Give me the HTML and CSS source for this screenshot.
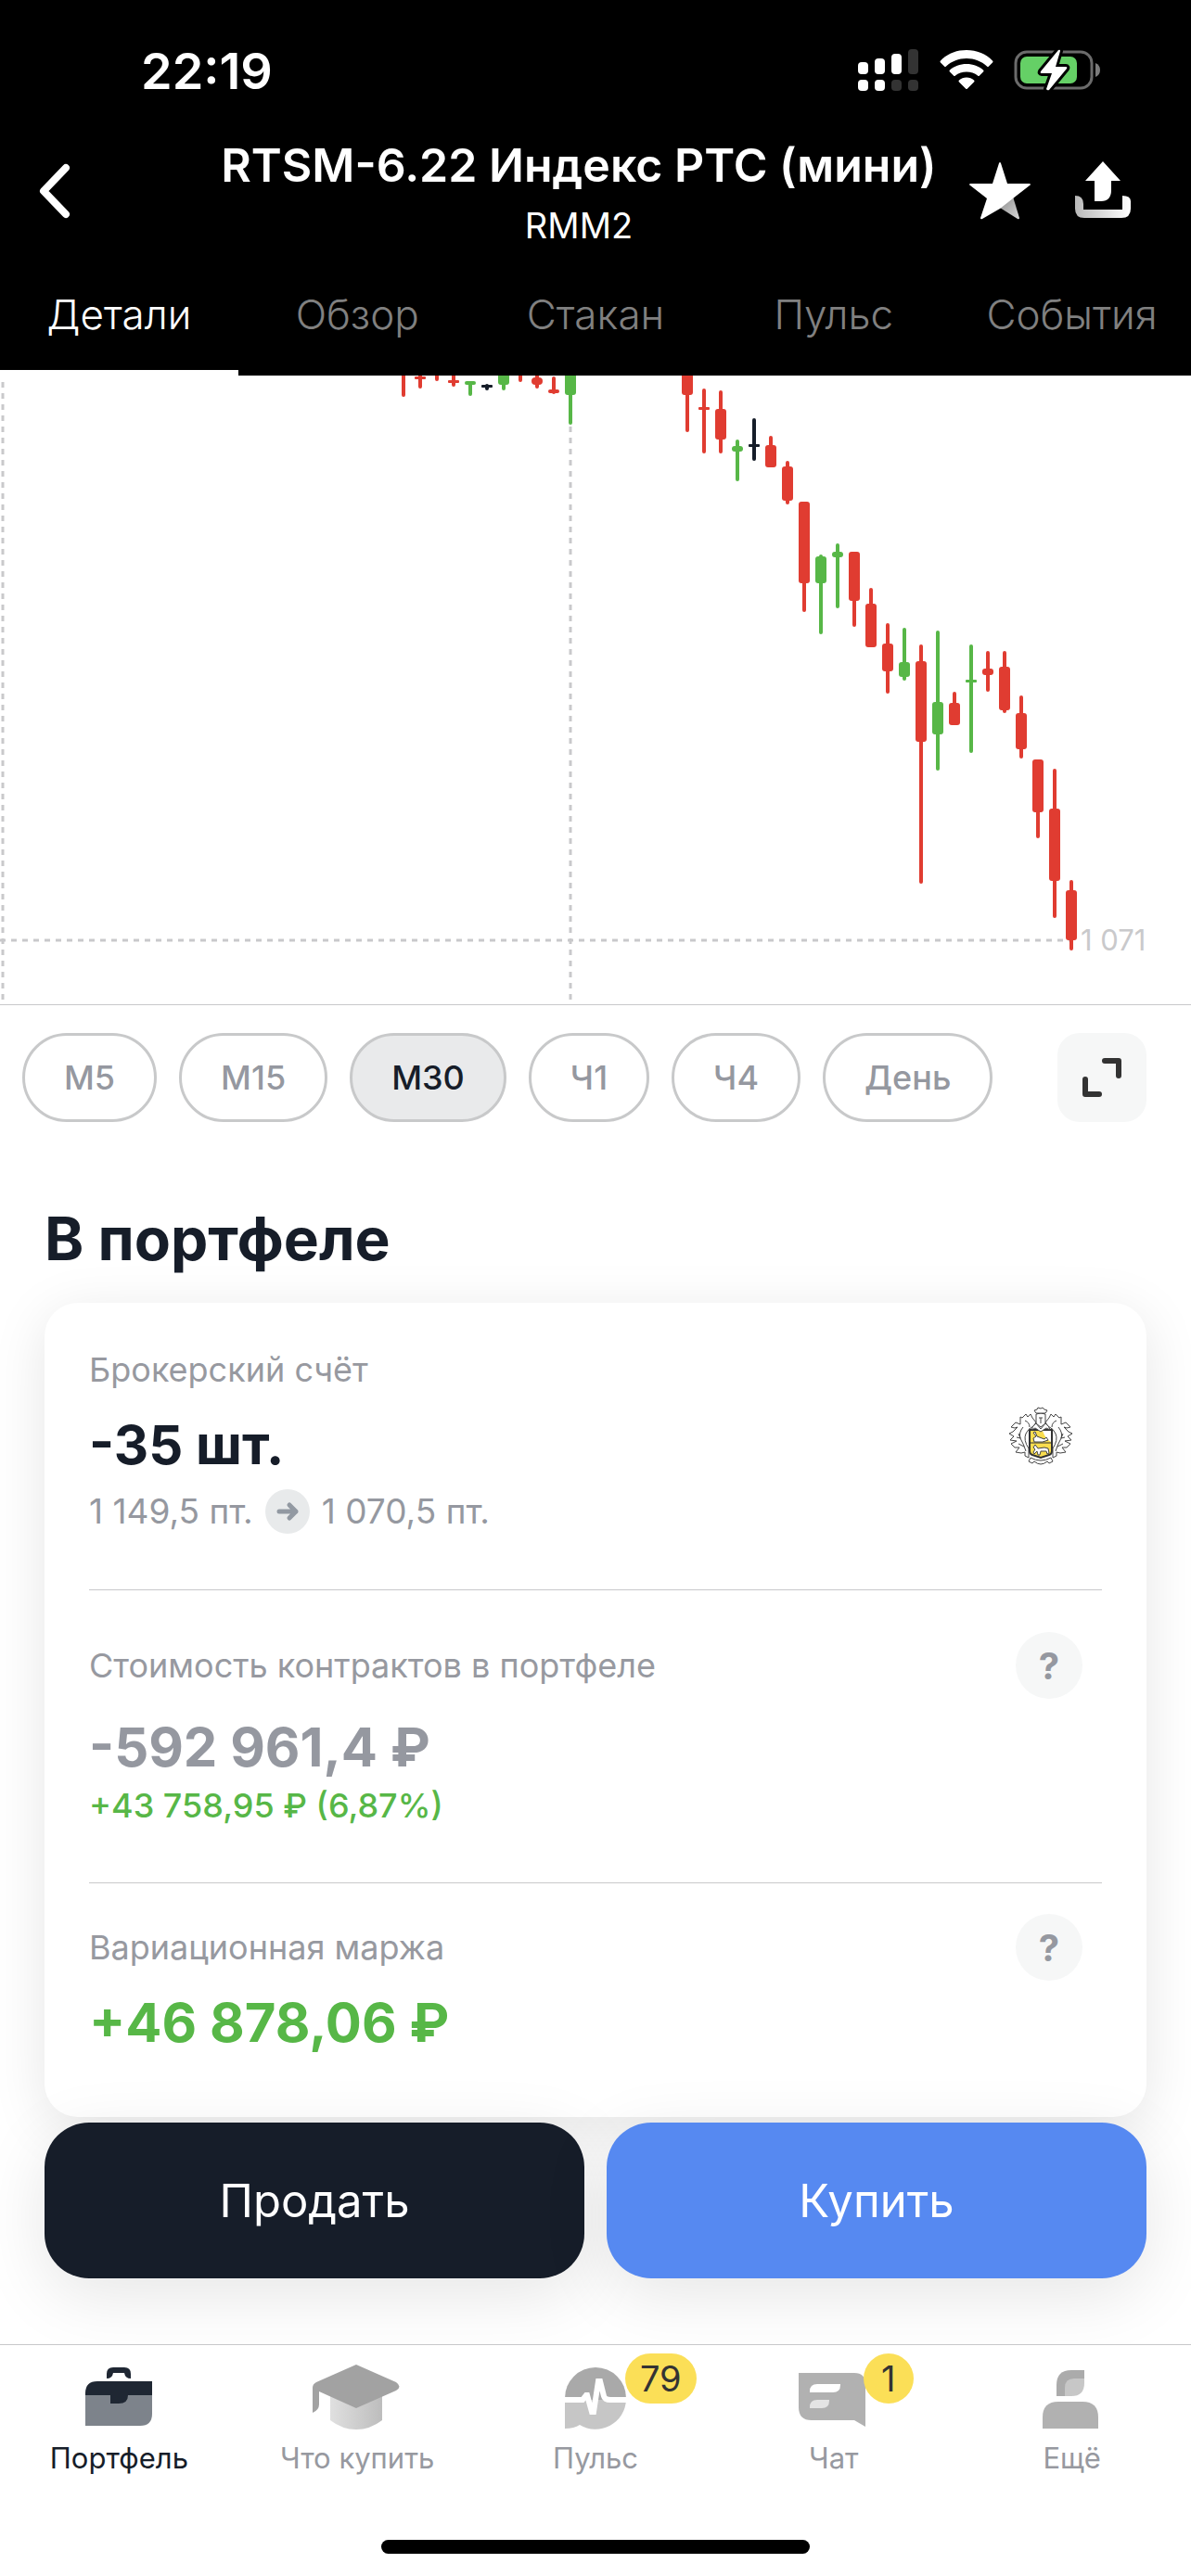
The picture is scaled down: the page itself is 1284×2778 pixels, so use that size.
FILE: index.html
```html
<!DOCTYPE html>
<html lang="ru">
<head>
    <meta charset="UTF-8">
    <meta name="viewport" content="width=device-width, initial-scale=1.0">
    <title>RTSM-6.22 Индекс РТС (мини)</title>
    <link rel="stylesheet" href="styles.css">
</head>
<body>

    <header class="header">
        <div class="status-bar">
            <time class="clock">22:19</time>
            <div class="status-icons">
                <svg width="66" height="46" viewBox="0 0 66 46" aria-hidden="true">
                    <g fill="#fff">
                        <rect x="0" y="14" width="11" height="13" rx="4"/>
                        <rect x="18" y="10" width="11" height="17" rx="4"/>
                        <rect x="36" y="5" width="11" height="22" rx="4"/>
                        <rect x="0" y="33" width="11" height="12" rx="4"/>
                        <rect x="18" y="33" width="11" height="12" rx="4"/>
                    </g>
                    <g fill="#333">
                        <rect x="54" y="0" width="11" height="27" rx="4"/>
                        <rect x="36" y="33" width="11" height="12" rx="4"/>
                        <rect x="54" y="33" width="11" height="12" rx="4"/>
                    </g>
                </svg>
                <svg width="58" height="46" viewBox="0 0 58 46" aria-hidden="true">
                    <path fill="#fff" d="M29 1C18 1 8 5 1 12.500Q0 13.500 1 14.500L5 18.500Q6 19.500 7 18.500C13 13 20.500 10 29 10S45 13 51 18.500Q52 19.500 53 18.500L57 14.500Q58 13.500 57 12.500C50 5 40 1 29 1ZM29 16C22 16 15.500 18.500 11 22.500Q10 23.500 11 24.500L15 28.500Q16 29.500 17 28.500C20 26 24.500 24.500 29 24.500S38 26 41 28.500Q42 29.500 43 28.500L47 24.500Q48 23.500 47 22.500C42.500 18.500 36 16 29 16ZM29 30.500C26 30.500 23 31.700 21 33.500Q20 34.500 21 35.500L28 42.500Q29 43.500 30 42.500L37 35.500Q38 34.500 37 33.500C35 31.700 32 30.500 29 30.500Z"/>
                </svg>
                <svg width="96" height="46" viewBox="0 0 96 46" aria-hidden="true">
                    <rect x="2" y="3" width="82" height="39" rx="12" fill="none" stroke="#6b6b6b" stroke-width="3"/>
                    <path fill="#7c7c7c" d="M88 15q5 2 5 7.500t-5 7.500z"/>
                    <rect x="7" y="8" width="61" height="29" rx="7" fill="#65d066"/>
                    <path fill="#fff" stroke="#000" stroke-width="6" stroke-linejoin="round" paint-order="stroke" d="M48 1L29 24Q28 26 30 26H41L35 43Q36 45 38 44L57 21Q58 19 56 19H45L50 2Q50 0 48 1Z"/>
                </svg>
            </div>
        </div>

        <div class="title-bar">
            <button class="icon-button back" type="button" aria-label="Назад">
                <svg width="44" height="64" viewBox="0 0 44 64" aria-hidden="true">
                    <path d="M35 7L11 32L35 57" fill="none" stroke="#fff" stroke-width="8" stroke-linecap="round" stroke-linejoin="round"/>
                </svg>
            </button>
            <div class="titles">
                <h1 class="title">RTSM-6.22 Индекс РТС (мини)</h1>
                <p class="ticker">RMM2</p>
            </div>
            <button class="icon-button" type="button" aria-label="В избранное">
                <svg width="66" height="64" viewBox="0 0 66 64" aria-hidden="true">
                    <defs>
                        <linearGradient id="starShade" x1="0" y1="0" x2="1" y2="1">
                            <stop offset="0" stop-color="#8c8c8c"/>
                            <stop offset="1" stop-color="#d8d8d8"/>
                        </linearGradient>
                    </defs>
                    <path fill="url(#starShade)" d="M33 50L47 38L54 61Q54 63 52 62Z"/>
                    <path fill="#fff" d="M32 2Q33 0 34 2L41 24H65Q67 25 65 26L47 40L33 51L14 62Q12 63 12 61L19 40L1 26Q-1 25 1 24H25Z"/>
                </svg>
            </button>
            <button class="icon-button" type="button" aria-label="Поделиться">
                <svg width="62" height="64" viewBox="0 0 62 64" aria-hidden="true">
                    <defs>
                        <linearGradient id="trayShade" x1="0" y1="0" x2="1" y2="0">
                            <stop offset="0" stop-color="#b9b9b9"/>
                            <stop offset=".85" stop-color="#f4f4f4"/>
                            <stop offset="1" stop-color="#fff"/>
                        </linearGradient>
                    </defs>
                    <path fill="url(#trayShade)" d="M1 37Q10 37 10 46V52H52V37Q61 37 61 43V51Q61 61 51 61H11Q1 61 1 51Z"/>
                    <path fill="#fff" d="M31 0L50 21H40V31Q40 43 29 43H22V21H12Z"/>
                </svg>
            </button>
        </div>

        <nav class="tabs">
            <a class="tab active" href="#details">Детали</a>
            <a class="tab" href="#overview">Обзор</a>
            <a class="tab" href="#orders">Стакан</a>
            <a class="tab" href="#pulse">Пульс</a>
            <a class="tab" href="#events">События</a>
        </nav>
    </header>

    <main>
        <section class="chart" aria-label="График">
            <svg class="candles" viewBox="0 0 1284 678" role="img">
                <g class="guides">
                    <path d="M3 7V678"/>
                    <path d="M615 55V678"/>
                    <path d="M0 609H1155"/>
                </g>
                <g class="down">
                    <path d="M435 -4V21M453 -4V12M471 -4V4M489 -4V10M561 -4V5M579 -4V12M597 3V18M741 0V59M759 16V82M777 18V82M831 67V90M849 94V137M867 140V253M921 195V269M939 231V285M957 269V341M993 292V546M1029 343V370M1065 299V339M1083 299V362M1101 347V411M1119 420V497M1137 426V583M1155 546V618"/>
                    <rect x="447" y="1" width="12" height="3" rx="1"/>
                    <rect x="483" y="5" width="12" height="3" rx="1"/>
                    <rect x="573" y="2" width="12" height="8" rx="4"/>
                    <rect x="591" y="15" width="12" height="4" rx="2"/>
                    <rect x="735" y="-8" width="12" height="29" rx="3"/>
                    <rect x="753" y="34" width="12" height="3" rx="1"/>
                    <rect x="771" y="36" width="12" height="33" rx="3"/>
                    <rect x="825" y="75" width="12" height="24" rx="3"/>
                    <rect x="843" y="98" width="12" height="37" rx="3"/>
                    <rect x="861" y="136" width="12" height="88" rx="3"/>
                    <rect x="915" y="190" width="12" height="53" rx="3"/>
                    <rect x="933" y="246" width="12" height="47" rx="3"/>
                    <rect x="951" y="289" width="12" height="30" rx="3"/>
                    <rect x="987" y="308" width="12" height="87" rx="3"/>
                    <rect x="1023" y="353" width="12" height="24" rx="3"/>
                    <rect x="1059" y="316" width="12" height="7" rx="3"/>
                    <rect x="1077" y="314" width="12" height="47" rx="3"/>
                    <rect x="1095" y="364" width="12" height="39" rx="3"/>
                    <rect x="1113" y="414" width="12" height="57" rx="3"/>
                    <rect x="1131" y="467" width="12" height="78" rx="3"/>
                    <rect x="1149" y="555" width="12" height="54" rx="3"/>
                </g>
                <g class="up">
                    <path d="M507 9V20M543 -4V14M615 0V51M795 71V112M885 195V277M903 183V249M975 274V327M1011 277V424M1047 292V405"/>
                    <rect x="501" y="6" width="12" height="4" rx="2"/>
                    <rect x="537" y="-8" width="12" height="18" rx="3"/>
                    <rect x="609" y="-8" width="12" height="29" rx="3"/>
                    <rect x="789" y="76" width="12" height="6" rx="3"/>
                    <rect x="879" y="195" width="12" height="29" rx="3"/>
                    <rect x="897" y="190" width="12" height="6" rx="3"/>
                    <rect x="969" y="309" width="12" height="16" rx="3"/>
                    <rect x="1005" y="352" width="12" height="35" rx="3"/>
                    <rect x="1041" y="328" width="12" height="3" rx="1"/>
                </g>
                <g class="flat">
                    <path d="M525 11V14M813 48V90"/>
                    <rect x="519" y="10" width="12" height="3" rx="1"/>
                    <rect x="807" y="74" width="12" height="3" rx="1"/>
                </g>
                <text class="price" x="1165" y="620">1 071</text>
            </svg>
        </section>

        <div class="range-bar">
            <button class="range" type="button">M5</button>
            <button class="range" type="button">M15</button>
            <button class="range selected" type="button">M30</button>
            <button class="range" type="button">Ч1</button>
            <button class="range" type="button">Ч4</button>
            <button class="range" type="button">День</button>
            <button class="expand" type="button" aria-label="На весь экран">
                <svg width="44" height="44" viewBox="0 0 44 44" aria-hidden="true">
                    <path d="M25 4H40V20M4 24V40H19" fill="none" stroke="#333" stroke-width="6" stroke-linecap="round" stroke-linejoin="round"/>
                </svg>
            </button>
        </div>

        <section class="portfolio" id="details">
            <h2 class="section-title">В портфеле</h2>

            <div class="card">
                <div class="card-row account">
                    <div>
                        <p class="label">Брокерский счёт</p>
                        <p class="value">-35 шт.</p>
                        <p class="prices">
                            <span>1 149,5 пт.</span>
                            <svg width="48" height="48" viewBox="0 0 48 48" aria-hidden="true">
                                <circle cx="24" cy="24" r="24" fill="#e8eaeb"/>
                                <path d="M15 24H33M26 17L33 24L26 31" fill="none" stroke="#9299a2" stroke-width="5" stroke-linecap="round" stroke-linejoin="round"/>
                            </svg>
                            <span>1 070,5 пт.</span>
                        </p>
                    </div>
                    <svg class="crest" width="72" height="66" viewBox="0 0 72 66" aria-hidden="true">
                        <path fill="#f9dd4e" stroke="#333" stroke-width="2" d="M24 26H48V49Q48 52 45 53L36 56L27 53Q24 52 24 49Z"/>
                        <path fill="#fff" d="M38 27H47V39L43 36Q40 33 38 27Z"/>
                        <path stroke="#333" stroke-width="1" d="M24 40H48"/>
                        <g fill="#fff" stroke="#444" stroke-width="1" stroke-linejoin="round">
                            <path d="M28 29L30 28L32 33L40 36L42 34L44 37L38 39H29L28 35L31 33Z"/>
                            <path d="M30 42L33 46L40 45L44 46L45 51L43 52L42 49L36 49L35 53H33L32 49L29 52L28 50L30 47L28 45Z"/>
                            <path d="M31 9Q36 7 41 9V19L36 23L31 19ZM34 13H36V19M36 13H38"/>
                            <path d="M29 5L32 4L33 2L36 3L38 2L40 4L43 5L41 8H31Z"/>
                            <path d="M26 26Q27 21 31 19L36 25L41 19Q45 21 46 26L42 24L36 28L30 24Z"/>
                            <path d="M31 18L27 13L25 9L22 12L20 9L16 13L14 12V20L9 18L4 23L8 24L11 23L6 28L2 30L7 33L3 37L10 38L4 41L8 45L13 45L9 50L15 51L19 50V54L23 56L23 46Q17 37 20 30Q22 25 28 22Z"/>
                            <path d="M41 18L45 13L47 9L50 12L52 9L56 13L58 12V20L63 18L68 23L64 24L61 23L66 28L70 30L65 33L69 37L62 38L68 41L64 45L59 45L63 50L57 51L53 50V54L49 56L49 46Q55 37 52 30Q50 25 44 22Z"/>
                            <path fill="none" d="M19 16Q24 18 24 23M17 23Q12 29 14 35Q18 42 20 49M12 30L14 35L10 34M12 41L18 44M53 16Q48 18 48 23M55 23Q60 29 58 35Q54 42 52 49M60 30L58 35L62 34M60 41L54 44"/>
                            <path d="M25 56Q36 62 47 56L49 60L45 62L43 60Q36 66 29 60L27 62L23 60Z"/>
                        </g>
                    </svg>
                </div>

                <div class="card-row contracts">
                    <div class="label-line">
                        <p class="label">Стоимость контрактов в портфеле</p>
                        <button class="help" type="button" aria-label="Подсказка о стоимости">?</button>
                    </div>
                    <p class="value muted">-592 961,4 ₽</p>
                    <p class="change">+43 758,95 ₽ (6,87%)</p>
                </div>

                <div class="card-row margin">
                    <div class="label-line">
                        <p class="label">Вариационная маржа</p>
                        <button class="help" type="button" aria-label="Подсказка о марже">?</button>
                    </div>
                    <p class="value gain">+46 878,06 ₽</p>
                </div>
            </div>

            <div class="actions">
                <button class="action sell" type="button">Продать</button>
                <button class="action buy" type="button">Купить</button>
            </div>
        </section>
    </main>

    <footer class="footer">
        <nav class="tab-bar">
            <a class="tab-item current" href="#portfolio">
                <span class="tab-icon">
                    <svg width="96" height="80" viewBox="0 0 96 80" aria-hidden="true">
                        <path fill="#7d838b" d="M12 40H84V62Q84 75 71 75H12Z"/>
                        <path fill="#1f2733" d="M12 42V40Q12 27 25 27H84V42H58Q58 51 48 51H39V42ZM35 24V19Q35 12 42 12H54Q61 12 61 19V24Q55 24 54 18H42Q41 24 35 24Z"/>
                    </svg>
                </span>
                Портфель
            </a>
            <a class="tab-item" href="#invest">
                <span class="tab-icon">
                    <svg width="96" height="80" viewBox="0 0 96 80" aria-hidden="true">
                        <defs>
                            <linearGradient id="capShade" x1="0" y1="0" x2="1" y2="0">
                                <stop offset="0" stop-color="#e0e0e0"/>
                                <stop offset="1" stop-color="#bdbdbd"/>
                            </linearGradient>
                        </defs>
                        <path fill="url(#capShade)" d="M19 40H75V69Q62 79 47 79T19 69Z"/>
                        <path fill="#a2a2a2" d="M47 9L90 28Q97 33 90 37L47 56L7 38V52Q7 58 0 61V34Q0 30 4 28Z"/>
                    </svg>
                </span>
                Что купить
            </a>
            <a class="tab-item" href="#feed">
                <span class="tab-icon">
                    <svg width="96" height="80" viewBox="0 0 96 80" aria-hidden="true">
                        <path fill="#a9a9a9" d="M15 47V45A33 33 0 0 1 81 45V47Z"/>
                        <path fill="#c6c6c6" d="M15 47H81A33 33 0 0 1 31 74Q25 78 15 78Z"/>
                        <path d="M15 47H34L38 42H39L44 60H46L51 27H53L57 43Q58 47 64 47H82" fill="none" stroke="#fff" stroke-width="6"/>
                    </svg>
                    <span class="badge">79</span>
                </span>
                Пульс
            </a>
            <a class="tab-item" href="#chat">
                <span class="tab-icon">
                    <svg width="96" height="80" viewBox="0 0 96 80" aria-hidden="true">
                        <path fill="#b1b1b1" d="M10 18H70Q82 18 82 30V76L70 69H24Q10 69 10 55Z"/>
                        <path fill="#fff" d="M22 39V38Q22 30 30 30H55V31Q55 39 47 39Z"/>
                        <path fill="#e4e4e4" d="M22 56V55Q22 47 30 47H43V48Q43 56 35 56Z"/>
                    </svg>
                    <span class="badge">1</span>
                </span>
                Чат
            </a>
            <a class="tab-item" href="#more">
                <span class="tab-icon">
                    <svg width="96" height="80" viewBox="0 0 96 80" aria-hidden="true">
                        <path fill="#ababab" d="M31 43V31Q31 15 47 15H61V26L40 43Z"/>
                        <path fill="#c7c7c7" d="M40 43V34Q40 24 50 24H61V29Q61 43 47 43Z"/>
                        <path fill="#b1b1b1" d="M16 78V66Q16 49 33 49H59Q76 49 76 66V78Z"/>
                    </svg>
                </span>
                Ещё
            </a>
        </nav>
        <div class="home-indicator"></div>
    </footer>

</body>
</html>
```
FILE: styles.css
```css
* {
    box-sizing: border-box;
}
body {
    margin: 0;
    font-family: Inter, "Liberation Sans", sans-serif;
    color: #161d29;
    background: #fff;
}
h1, h2, p {
    margin: 0;
}
button {
    padding: 0;
    border: none;
    font-family: inherit;
    cursor: pointer;
}
a {
    text-decoration: none;
}
svg {
    display: block;
}

/* Header */
.header {
    background: #000;
    color: #fff;
}
.status-bar {
    display: flex;
    justify-content: space-between;
    align-items: flex-end;
    height: 108px;
    padding: 0 95px 0 152px;
}
.clock {
    font-size: 54px;
    font-weight: 600;
    line-height: 62px;
}
.status-icons {
    display: flex;
    gap: 22px;
    padding-bottom: 9px;
}
.title-bar {
    display: grid;
    grid-template-columns: 226px 1fr 111px 111px;
    margin-top: 38px;
    padding-right: 40px;
}
.icon-button {
    display: flex;
    justify-content: center;
    align-items: center;
    height: 120px;
    background: none;
}
.back {
    justify-content: flex-start;
    padding-left: 36px;
}
.titles {
    text-align: center;
    white-space: nowrap;
}
.title {
    font-size: 50px;
    font-weight: 600;
    line-height: 64px;
}
.ticker {
    font-size: 38px;
    line-height: 66px;
}
.tabs {
    display: grid;
    grid-template-columns: repeat(5, 1fr);
}
.tab {
    height: 129px;
    padding-top: 4px;
    border-bottom: 6px solid #000;
    font-size: 44px;
    font-weight: 300;
    line-height: 119px;
    text-align: center;
    color: #808080;
}
.tab.active {
    border-color: #fff;
    color: #fff;
}

/* Chart */
.chart {
    border-bottom: 1px solid #c8c8ca;
}
.candles {
    width: 100%;
    height: auto;
}
.candles path {
    fill: none;
    stroke-width: 4;
    stroke-linecap: round;
}
.candles .guides path {
    stroke: #c9c9cb;
    stroke-width: 3;
    stroke-linecap: butt;
    stroke-dasharray: 6 6;
}
.down {
    fill: #e03c31;
    stroke: #e03c31;
}
.up {
    fill: #57b747;
    stroke: #57b747;
}
.flat {
    fill: #161d29;
    stroke: #161d29;
}
.candles rect {
    stroke: none;
}
.price {
    font-size: 31px;
    fill: #c9c9cb;
}

/* Chart ranges */
.range-bar {
    display: flex;
    gap: 24px;
    padding: 30px 48px 0 24px;
}
.range {
    height: 96px;
    padding: 0 42px;
    border: 3px solid #c8c9ca;
    border-radius: 48px;
    font-size: 36px;
    font-weight: 500;
    color: #9598a0;
    background: #fff;
}
.range.selected {
    color: #161d29;
    background: #e9eaeb;
}
.expand {
    display: flex;
    justify-content: center;
    align-items: center;
    width: 96px;
    height: 96px;
    margin-left: auto;
    border-radius: 24px;
    background: #f6f7f7;
}

/* Portfolio */
.portfolio {
    padding: 86px 48px 71px;
    overflow: hidden;
}
.section-title {
    font-size: 64px;
    font-weight: 700;
    line-height: 80px;
}
.card {
    margin-top: 29px;
    padding: 0 48px;
    border-radius: 36px;
    background: #fff;
    box-shadow: 0 12px 60px rgba(0, 0, 0, 0.1);
}
.card-row + .card-row {
    border-top: 1px solid #c8c8ca;
}
.account {
    display: flex;
    justify-content: space-between;
    padding: 48px 30px 60px 0;
}
.crest {
    margin-top: 63px;
}
.label {
    font-size: 36px;
    line-height: 48px;
    color: #9799a0;
}
.value {
    font-size: 58px;
    font-weight: 700;
    line-height: 72px;
}
.account .value {
    margin: 21px 0 12px;
}
.muted {
    color: #9598a0;
}
.gain {
    color: #57b747;
}
.prices {
    display: flex;
    gap: 13px;
    font-size: 37px;
    line-height: 48px;
    color: #9598a0;
}
.label-line {
    display: flex;
    justify-content: space-between;
    align-items: center;
    padding-right: 21px;
}
.help {
    width: 72px;
    height: 72px;
    border-radius: 50%;
    font-size: 40px;
    font-weight: 700;
    color: #9598a0;
    background: #f6f7f7;
}
.contracts {
    padding: 45px 0 59px;
}
.contracts .value {
    margin: 16px 0 3px;
}
.change {
    font-size: 36px;
    font-weight: 500;
    line-height: 48px;
    color: #57b747;
}
.margin {
    padding: 33px 0 66px;
}
.margin .value {
    margin-top: 9px;
}
.actions {
    display: grid;
    grid-template-columns: 1fr 1fr;
    gap: 24px;
    margin-top: 6px;
}
.action {
    height: 168px;
    border-radius: 48px;
    font-size: 49px;
    color: #fff;
    box-shadow: 0 18px 72px rgba(0, 0, 0, 0.1);
}
.sell {
    background: #161d29;
}
.buy {
    background: #5689f1;
}

/* Bottom navigation */
.footer {
    border-top: 1px solid #c8c8ca;
    background: #fff;
}
.tab-bar {
    display: grid;
    grid-template-columns: repeat(5, 1fr);
    padding-top: 12px;
}
.tab-item {
    display: flex;
    flex-direction: column;
    align-items: center;
    gap: 10px;
    font-size: 31px;
    line-height: 40px;
    color: #9799a0;
}
.tab-item.current {
    color: #161d29;
}
.tab-icon {
    position: relative;
}
.badge {
    position: absolute;
    top: -3px;
    left: 80px;
    min-width: 54px;
    padding: 0 16px;
    border-radius: 27px;
    font-size: 38px;
    line-height: 54px;
    text-align: center;
    color: #333;
    background: #fbdf57;
}
.home-indicator {
    width: 36%;
    height: 15px;
    margin: 68px auto 23px;
    border-radius: 8px;
    background: #000;
}
```
